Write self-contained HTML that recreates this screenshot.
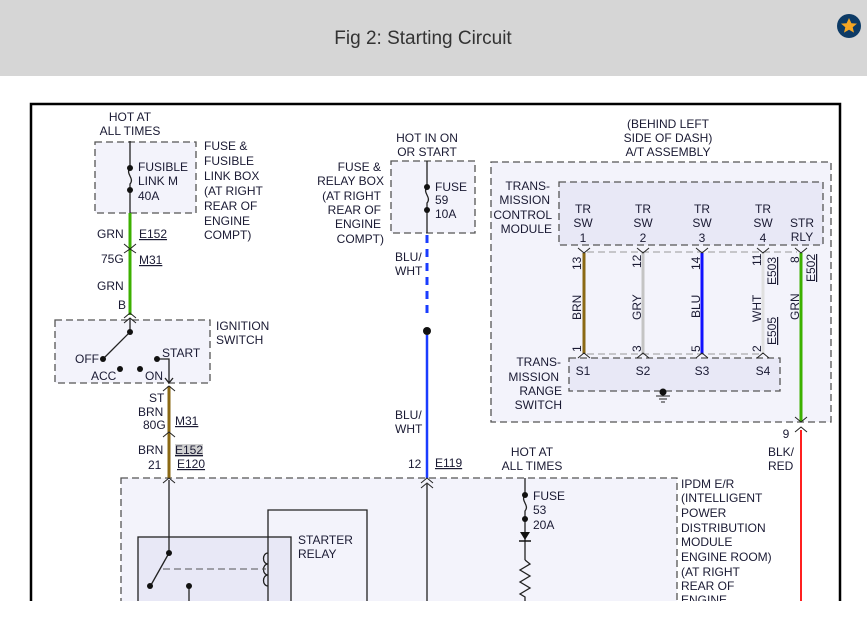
<!DOCTYPE html>
<html><head><meta charset="utf-8"><style>
html,body{margin:0;padding:0;background:#fff;width:867px;height:634px;overflow:hidden}
svg{display:block}
text{font-family:"Liberation Sans",Arial,sans-serif;font-size:12px;fill:#1a1a33}
.u{text-decoration:underline}
</style></head><body>
<svg width="867" height="634" viewBox="0 0 867 634" xmlns="http://www.w3.org/2000/svg">
<rect x="0" y="0" width="867" height="76" fill="#d6d6d6"/>
<text x="423" y="44" text-anchor="middle" style="font-size:19px;fill:#333">Fig 2: Starting Circuit</text>
<circle cx="849" cy="26" r="12" fill="#0d3b66"/>
<polygon points="849,18 851.4,23.2 857,23.6 852.7,27.2 854,32.6 849,29.8 844,32.6 845.3,27.2 841,23.6 846.6,23.2" fill="#f5a623"/>

<rect x="31" y="104" width="809" height="520" fill="#fff" stroke="#000" stroke-width="2.5"/>

<g stroke="#555" stroke-dasharray="7,4" stroke-width="1.3">
<rect x="95" y="142" width="101" height="71" fill="#f3f3fb"/>
<rect x="55" y="320" width="155" height="63" fill="#f3f3fb"/>
<rect x="391" y="161" width="84" height="72" fill="#f3f3fb"/>
<rect x="491" y="162" width="340" height="260" fill="#f3f3fb"/>
<rect x="559" y="182" width="264" height="63" fill="#e8e8f6"/>
<rect x="569" y="358" width="211" height="33" fill="#e8e8f6"/>
<rect x="121" y="478" width="556" height="140" fill="#f3f3fb"/>
</g>
<line x1="587" y1="252" x2="797" y2="252" stroke="#999" stroke-dasharray="7,4"/>
<line x1="587" y1="354" x2="760" y2="354" stroke="#999" stroke-dasharray="7,4"/>

<g stroke="#222" fill="none" stroke-width="1.3">
<line x1="130" y1="141" x2="130" y2="168"/>
<path d="M130,168 c-5,6 5,10 0,16 v6"/>
<line x1="130" y1="190" x2="130" y2="213"/>
</g>
<circle cx="130" cy="168" r="3" fill="#111"/><circle cx="130" cy="190" r="3" fill="#111"/>
<text x="130" y="121" text-anchor="middle">HOT AT</text>
<text x="130" y="135" text-anchor="middle">ALL TIMES</text>
<text x="138" y="171">FUSIBLE</text><text x="138" y="185">LINK M</text><text x="138" y="200">40A</text>
<text x="204" y="150">FUSE &amp;</text><text x="204" y="165">FUSIBLE</text><text x="204" y="180">LINK BOX</text><text x="204" y="195">(AT RIGHT</text><text x="204" y="210">REAR OF</text><text x="204" y="225">ENGINE</text><text x="204" y="239">COMPT)</text>
<line x1="130" y1="213" x2="130" y2="315" stroke="#3cb000" stroke-width="3"/>
<g stroke="#222" fill="none" stroke-width="1">
<path d="M124,244 l6,5 6,-5 M124,253 l6,-4 6,4"/>
<path d="M124,318 l6,-5 6,5 M124,323 l6,-5 6,5"/>
</g>
<text x="97" y="238">GRN</text><text x="139" y="238" class="u">E152</text>
<text x="101" y="263">75G</text><text x="139" y="264" class="u">M31</text>
<text x="97" y="290">GRN</text><text x="118" y="309">B</text>

<g stroke="#222" fill="none" stroke-width="1.3">
<line x1="130" y1="318" x2="130" y2="332"/>
<line x1="130" y1="332" x2="104" y2="358"/>
<path d="M157,359 h12 v24"/>
<path d="M165,378 l4,5 4,-5"/>
</g>
<circle cx="130" cy="332" r="3" fill="#111"/><circle cx="103" cy="359" r="3" fill="#111"/>
<circle cx="120" cy="369" r="3" fill="#111"/><circle cx="140" cy="369" r="3" fill="#111"/><circle cx="157" cy="359" r="3" fill="#111"/>
<text x="75" y="363">OFF</text><text x="91" y="380">ACC</text><text x="145" y="380">ON</text><text x="162" y="357">START</text>
<text x="216" y="330">IGNITION</text><text x="216" y="344">SWITCH</text>
<line x1="169" y1="386" x2="169" y2="478" stroke="#8b6914" stroke-width="3"/>
<g stroke="#222" fill="none" stroke-width="1">
<path d="M163,391 l6,-5 6,5 M163,437 l6,-5 6,5 M163,483 l6,-5 6,5"/>
</g>
<text x="149" y="402">ST</text><text x="138" y="416">BRN</text><text x="143" y="429">80G</text><text x="175" y="425" class="u">M31</text>
<rect x="175" y="444" width="28" height="13" fill="#d0d0d0"/>
<text x="138" y="454">BRN</text><text x="148" y="469">21</text><text x="175" y="454" class="u">E152</text><text x="177" y="468" class="u">E120</text>

<rect x="138" y="537" width="153" height="70" fill="#e8e8f6" stroke="#222" stroke-width="1.3"/>
<g stroke="#222" fill="none" stroke-width="1.3">
<line x1="169" y1="480" x2="169" y2="553"/>
<line x1="169" y1="553" x2="151" y2="585"/>
<line x1="189" y1="586" x2="189" y2="605"/>
<path d="M268,605 V510 H367 V605"/>
<path d="M268,553 c-6,0 -6,11 0,11 c-6,0 -6,11 0,11 c-6,0 -6,11 0,11"/>
</g>
<line x1="163" y1="569" x2="266" y2="569" stroke="#555" stroke-dasharray="7,4"/>
<circle cx="169" cy="553" r="3" fill="#111"/><circle cx="150" cy="586" r="3" fill="#111"/><circle cx="189" cy="586" r="3" fill="#111"/>
<text x="298" y="544">STARTER</text><text x="298" y="558">RELAY</text>

<text x="427" y="142" text-anchor="middle">HOT IN ON</text><text x="427" y="156" text-anchor="middle">OR START</text>
<g stroke="#222" fill="none" stroke-width="1.3">
<line x1="427" y1="161" x2="427" y2="187"/>
<path d="M427,187 c-5,6 5,10 0,16 v7"/>
<line x1="427" y1="210" x2="427" y2="233"/>
</g>
<circle cx="427" cy="187" r="3" fill="#111"/><circle cx="427" cy="210" r="3" fill="#111"/>
<text x="435" y="191">FUSE</text><text x="435" y="204">59</text><text x="435" y="218">10A</text>
<g text-anchor="end"><text x="381" y="171">FUSE &amp;</text><text x="384" y="185">RELAY BOX</text><text x="381" y="200">(AT RIGHT</text><text x="381" y="214">REAR OF</text><text x="381" y="228">ENGINE</text><text x="384" y="243">COMPT)</text></g>
<line x1="427" y1="235" x2="427" y2="318" stroke="#1a3cff" stroke-width="3" stroke-dasharray="8,6"/>
<circle cx="427" cy="331" r="4" fill="#111"/>
<line x1="427" y1="335" x2="427" y2="478" stroke="#1a3cff" stroke-width="2.5"/>
<text x="395" y="261">BLU/</text><text x="395" y="275">WHT</text>
<text x="395" y="419">BLU/</text><text x="395" y="433">WHT</text>
<text x="408" y="468">12</text><text x="435" y="467" class="u">E119</text>
<path d="M421,483 l6,-5 6,5 M421,488 l6,-5 6,5" stroke="#222" fill="none"/>
<line x1="427" y1="484" x2="427" y2="605" stroke="#222" stroke-width="1.3"/>

<text x="532" y="456" text-anchor="middle">HOT AT</text><text x="532" y="470" text-anchor="middle">ALL TIMES</text>
<g stroke="#222" fill="none" stroke-width="1.3">
<line x1="525" y1="478" x2="525" y2="495"/>
<path d="M525,495 c-5,6 5,10 0,16 v8"/>
<line x1="525" y1="519" x2="525" y2="560"/>
<path d="M525,560 l5,4 -10,6 10,6 -10,6 10,6 -10,6 5,3 v10"/>
</g>
<polygon points="520,532 530,532 525,540" fill="#111"/><line x1="519" y1="541" x2="531" y2="541" stroke="#111" stroke-width="1.5"/>
<circle cx="525" cy="495" r="3" fill="#111"/><circle cx="525" cy="519" r="3" fill="#111"/>
<text x="533" y="500">FUSE</text><text x="533" y="514">53</text><text x="533" y="529">20A</text>
<text x="681" y="488">IPDM E/R</text><text x="681" y="502">(INTELLIGENT</text><text x="681" y="517">POWER</text><text x="681" y="532">DISTRIBUTION</text><text x="681" y="546">MODULE</text><text x="681" y="561">ENGINE ROOM)</text><text x="681" y="576">(AT RIGHT</text><text x="681" y="590">REAR OF</text><text x="681" y="604">ENGINE</text>

<text x="668" y="128" text-anchor="middle">(BEHIND LEFT</text><text x="668" y="142" text-anchor="middle">SIDE OF DASH)</text><text x="668" y="156" text-anchor="middle">A/T ASSEMBLY</text>
<g text-anchor="end"><text x="550" y="190">TRANS-</text><text x="550" y="204">MISSION</text><text x="552" y="219">CONTROL</text><text x="552" y="233">MODULE</text></g>
<g text-anchor="middle">
<text x="583" y="213">TR</text><text x="583" y="227">SW</text><text x="583" y="242">1</text>
<text x="643" y="213">TR</text><text x="643" y="227">SW</text><text x="643" y="242">2</text>
<text x="702" y="213">TR</text><text x="702" y="227">SW</text><text x="702" y="242">3</text>
<text x="763" y="213">TR</text><text x="763" y="227">SW</text><text x="763" y="242">4</text>
<text x="802" y="227">STR</text><text x="802" y="241">RLY</text>
<text x="583" y="375">S1</text><text x="643" y="375">S2</text><text x="702" y="375">S3</text><text x="763" y="375">S4</text>
</g>
<line x1="584" y1="253" x2="584" y2="354" stroke="#8b6914" stroke-width="3"/>
<line x1="643" y1="253" x2="643" y2="354" stroke="#c4c4c4" stroke-width="3"/>
<line x1="702" y1="253" x2="702" y2="354" stroke="#1010ff" stroke-width="3"/>
<line x1="763" y1="253" x2="763" y2="354" stroke="#e0e0e0" stroke-width="3"/>
<line x1="801" y1="253" x2="801" y2="422" stroke="#3cb000" stroke-width="3"/>
<line x1="801" y1="430" x2="801" y2="610" stroke="#ff2020" stroke-width="2"/>
<g stroke="#222" fill="none" stroke-width="1">
<path d="M578,248 l6,5 6,-5 M637,248 l6,5 6,-5 M696,248 l6,5 6,-5 M757,248 l6,5 6,-5 M795,248 l6,5 6,-5"/>
<path d="M578,358 l6,-5 6,5 M637,358 l6,-5 6,5 M696,358 l6,-5 6,5 M757,358 l6,-5 6,5"/>
<path d="M795,417 l6,5 6,-5 M795,432 l6,-5 6,5"/>
</g>
<g>
<text transform="translate(581,270) rotate(-90)">13</text>
<text transform="translate(641,268) rotate(-90)">12</text>
<text transform="translate(700,270) rotate(-90)">14</text>
<text transform="translate(761,266) rotate(-90)">11</text>
<text transform="translate(799,263) rotate(-90)">8</text>
<text transform="translate(581,320) rotate(-90)">BRN</text>
<text transform="translate(641,320) rotate(-90)">GRY</text>
<text transform="translate(700,318) rotate(-90)">BLU</text>
<text transform="translate(761,322) rotate(-90)">WHT</text>
<text transform="translate(799,320) rotate(-90)">GRN</text>
<text transform="translate(776,285) rotate(-90)" class="u">E503</text>
<text transform="translate(776,345) rotate(-90)" class="u">E505</text>
<text transform="translate(815,282) rotate(-90)" class="u">E502</text>
<text transform="translate(581,352) rotate(-90)">1</text>
<text transform="translate(641,352) rotate(-90)">3</text>
<text transform="translate(700,352) rotate(-90)">5</text>
<text transform="translate(761,352) rotate(-90)">2</text>
</g>
<g text-anchor="end"><text x="561" y="366">TRANS-</text><text x="559" y="381">MISSION</text><text x="562" y="395">RANGE</text><text x="562" y="409">SWITCH</text></g>
<circle cx="663" cy="392" r="3.5" fill="#111"/>
<g stroke="#222" stroke-width="1"><line x1="656" y1="396" x2="670" y2="396"/><line x1="659" y1="399" x2="667" y2="399"/><line x1="661" y1="402" x2="665" y2="402"/></g>
<text x="786" y="438" text-anchor="middle">9</text>
<text x="768" y="456">BLK/</text><text x="768" y="470">RED</text>

<rect x="0" y="601" width="867" height="33" fill="#fff"/>
</svg>
</body></html>
